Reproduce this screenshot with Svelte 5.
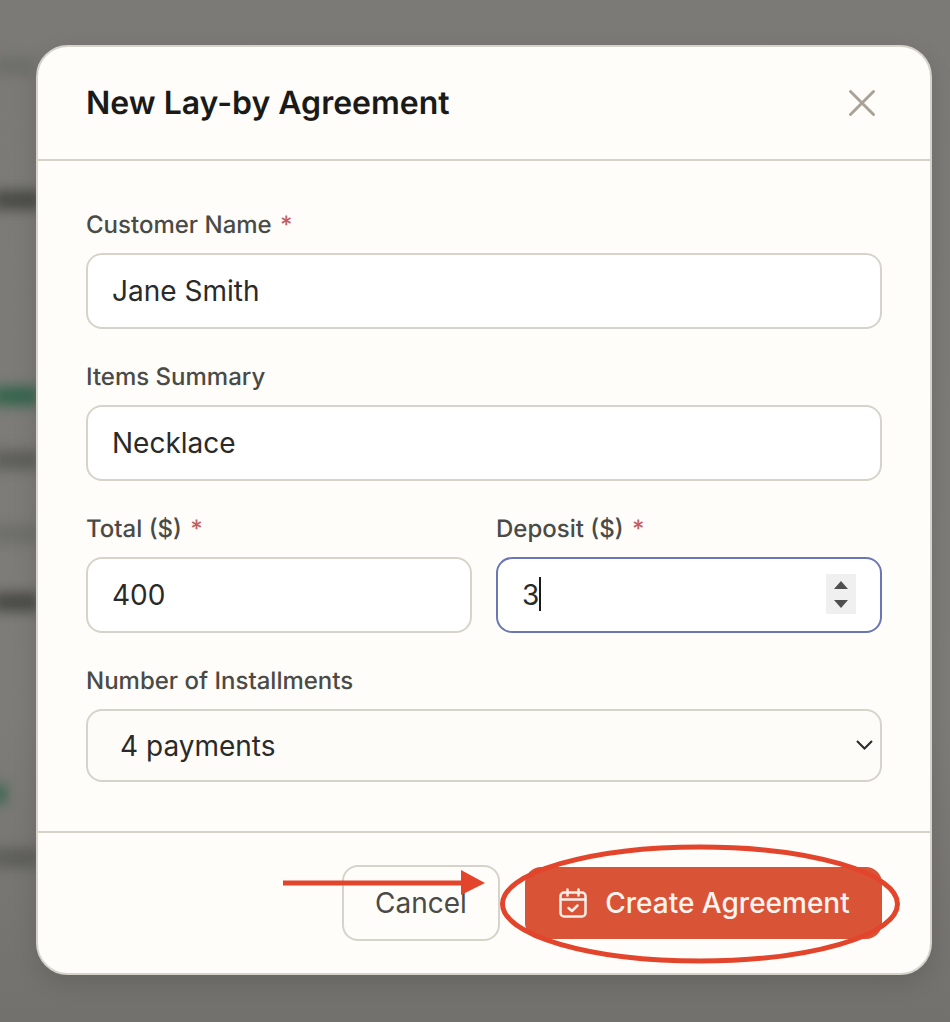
<script>
  const backdrop = [
    { cls: 'faint', top: 56, w: 40 },
    { cls: 'dark', top: 190, w: 46 },
    { cls: 'green', top: 386, w: 44 },
    { cls: 'mid', top: 450, w: 44 },
    { cls: 'faint', top: 524, w: 44 },
    { cls: 'dark', top: 592, w: 44 },
    { cls: 'green', top: 784, w: 12 },
    { cls: 'mid', top: 848, w: 44 }
  ];
</script>

<div class="page">
  <div class="backdrop" aria-hidden="true">
    {#each backdrop as b}
      <span class="smear {b.cls}" style="top:{b.top}px;width:{b.w}px"></span>
    {/each}
  </div>

  <div class="dialog">
    <header class="head">
      <h2>New Lay-by Agreement</h2>
      <button class="close" aria-label="Close">
        <svg width="28" height="28" viewBox="0 0 28 28" fill="none" stroke="#a8a297" stroke-width="3" stroke-linecap="round">
          <path d="M2.5 2.5 25.5 25.5M25.5 2.5 2.5 25.5" />
        </svg>
      </button>
    </header>

    <div class="body">
      <div class="field">
        <label for="cn">Customer Name <em>*</em></label>
        <input id="cn" class="input" type="text" value="Jane Smith" />
      </div>
      <div class="field">
        <label for="is">Items Summary</label>
        <input id="is" class="input" type="text" value="Necklace" />
      </div>
      <div class="row">
        <div class="field">
          <label for="tt">Total ($) <em>*</em></label>
          <input id="tt" class="input" type="text" value="400" />
        </div>
        <div class="field">
          <label for="dp">Deposit ($) <em>*</em></label>
          <div class="focus-wrap">
            <input id="dp" class="input focused" type="text" value="3" />
            <span class="caret"></span>
            <span class="spinner">
              <svg width="14" height="8" viewBox="0 0 14 8"><path d="M7 0 14 8H0Z" fill="#4f4f4f" /></svg>
              <svg width="14" height="8" viewBox="0 0 14 8"><path d="M0 0H14L7 8Z" fill="#4f4f4f" /></svg>
            </span>
          </div>
        </div>
      </div>
      <div class="field">
        <label for="np">Number of Installments</label>
        <div class="select-wrap">
          <select id="np" class="select">
            <option>4 payments</option>
          </select>
          <svg class="chev" width="17" height="10" viewBox="0 0 17 10" fill="none" stroke="#2a2a2a" stroke-width="2">
            <path d="M1 1 8.500 8.500 16 1" />
          </svg>
        </div>
      </div>
    </div>

    <footer class="foot">
      <button class="btn cancel">Cancel</button>
      <button class="btn create">
        <svg width="28" height="30" viewBox="0 0 28 30" fill="none" stroke="#fbeee8" stroke-width="2.5" stroke-linecap="round" stroke-linejoin="round">
          <rect x="1.500" y="4.500" width="25" height="24" rx="3.500" />
          <path d="M8.500 1.500V7.500M19.500 1.500V7.500M1.500 11.500H26.500M9.500 20 13 23 18.500 17.500" />
        </svg>
        Create Agreement
      </button>
    </footer>
  </div>

  <svg class="marks" width="950" height="1022" viewBox="0 0 950 1022" fill="none" aria-hidden="true">
    <path d="M283 883H462" stroke="#e2452c" stroke-width="5" />
    <path d="M461 870 485 883 461 895Z" fill="#e2452c" />
    <ellipse cx="700" cy="904" rx="197.500" ry="57" stroke="#e2452c" stroke-width="5" />
  </svg>
</div>

<style>
  :global(body) {
    margin: 0;
    background: #7a7a76;
  }
  .page {
    position: relative;
    box-sizing: border-box;
    width: 950px;
    height: 1022px;
    padding: 45px 18px 47px 36px;
    overflow: hidden;
    background: linear-gradient(#7b7a76 0, #7d7c78 70%, #72716d 100%);
    font-family: Inter, "Liberation Sans", sans-serif;
    text-rendering: geometricPrecision;
  }
  .backdrop {
    position: absolute;
    inset: 0;
    pointer-events: none;
  }
  .smear {
    position: absolute;
    left: -6px;
    height: 20px;
    filter: blur(6px);
  }
  .faint { background: #6f6f6b; }
  .mid { background: #5f5f5b; }
  .dark { background: #4c4c49; }
  .green { background: #39664f; }

  .dialog {
    position: relative;
    box-sizing: border-box;
    height: 930px;
    display: flex;
    flex-direction: column;
    background: #fefdfa;
    border: 2px solid #d6d4ca;
    border-radius: 32px;
    box-shadow: 0 8px 24px rgba(0, 0, 0, 0.12);
  }
  .head {
    box-sizing: border-box;
    height: 114px;
    flex: none;
    display: flex;
    align-items: center;
    justify-content: space-between;
    padding: 0 54px 0 48px;
    border-bottom: 2px solid #d6d4ca;
  }
  h2 {
    margin: 0;
    font-size: 32px;
    font-weight: 600;
    line-height: 40px;
    color: #1a1a18;
  }
  .close {
    display: flex;
    padding: 0;
    background: none;
    border: 0;
  }
  .body {
    flex: 1;
    display: flex;
    flex-direction: column;
    gap: 34px;
    padding: 50px 48px 0;
  }
  .row {
    display: grid;
    grid-template-columns: 1fr 1fr;
    gap: 24px;
  }
  .field {
    display: flex;
    flex-direction: column;
    gap: 14px;
    min-width: 0;
  }
  label {
    font-size: 24px;
    font-weight: 500;
    line-height: 28px;
    height: 28px;
    color: #4a4a46;
  }
  label em {
    font-style: normal;
    color: #c4605c;
    margin-left: 2px;
  }
  .input,
  .select {
    box-sizing: border-box;
    width: 100%;
    border: 2px solid #d6d4ca;
    border-radius: 16px;
    font: 400 28px/36px Inter, "Liberation Sans", sans-serif;
    color: #2a2a28;
    outline: none;
  }
  .input {
    height: 76px;
    padding: 0 24px;
    background: #fff;
  }
  .focused {
    border-color: #6a77b4;
  }
  .focus-wrap,
  .select-wrap {
    position: relative;
  }
  .caret {
    position: absolute;
    left: 42.500px;
    top: 20px;
    width: 2px;
    height: 34px;
    background: #1a1a18;
  }
  .spinner {
    position: absolute;
    right: 26px;
    top: 17px;
    box-sizing: border-box;
    width: 30px;
    height: 40px;
    padding: 7px 0 6px;
    display: flex;
    flex-direction: column;
    align-items: center;
    justify-content: space-between;
    background: #f0f0f0;
  }
  .spinner svg { display: block; }
  .select {
    appearance: none;
    height: 73px;
    padding: 0 32px;
    background: #fdfcf9;
  }
  .chev {
    position: absolute;
    right: 9px;
    top: 31px;
  }
  .foot {
    box-sizing: border-box;
    flex: none;
    height: 142px;
    display: flex;
    justify-content: flex-end;
    align-items: center;
    gap: 25px;
    padding: 0 48px;
    border-top: 2px solid #d6d4ca;
  }
  .btn {
    box-sizing: border-box;
    height: 76px;
    display: flex;
    align-items: center;
    justify-content: center;
    font: 500 28px/36px Inter, "Liberation Sans", sans-serif;
    border-radius: 16px;
  }
  .cancel {
    width: 158px;
    background: transparent;
    border: 2px solid #d6d4ca;
    color: #4a4a46;
    font-weight: 400;
  }
  .create {
    width: 357px;
    height: 72px;
    gap: 18px;
    padding: 0 0 0 2px;
    background: #d95337;
    border: 0;
    color: #fdf3ee;
  }
  .marks {
    position: absolute;
    left: 0;
    top: 0;
    pointer-events: none;
  }
</style>
